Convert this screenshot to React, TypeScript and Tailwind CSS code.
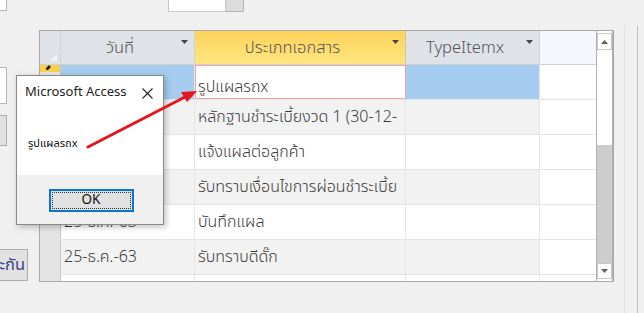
import { ReactNode } from "react";

const rows = [
  { date: "", type: "รูปแผลรถx", current: true },
  { date: "", type: "หลักฐานชำระเบี้ยงวด 1 (30-12-" },
  { date: "", type: "แจ้งแผลต่อลูกค้า" },
  { date: "", type: "รับทราบเงื่อนไขการผ่อนชำระเบี้ย" },
  { date: "25-ธ.ค.-63", type: "บันทึกแผล" },
  { date: "25-ธ.ค.-63", type: "รับทราบดีดั๊ก" },
  { date: "", type: "" },
];

function DropArrow() {
  return (
    <svg width="7" height="4" viewBox="0 0 7 4" className="shrink-0">
      <path d="M0 0h7L3.5 4z" fill="#444" />
    </svg>
  );
}

function HeaderCell({ children, yellow }: { children: ReactNode; yellow?: boolean }) {
  return (
    <div
      className={
        yellow
          ? "flex items-start h-full border-r border-[#d6c58a] bg-gradient-to-b from-[#fdd259] to-[#ffe680] pr-[6px]"
          : "flex items-start h-full border-r border-[#cfd3d8] bg-[#dfe2e7] pr-[6px]"
      }
    >
      <span className="flex-1 text-center pr-[2px] pt-[5px] text-[16.5px] font-[350] text-[#555]">{children}</span>
      <span className="pt-[9px]">
        <DropArrow />
      </span>
    </div>
  );
}

function DataRow({ r, i }: { r: (typeof rows)[number]; i: number }) {
  const alt = i % 2 === 1;
  const base = alt ? "bg-[#f2f2f2]" : "bg-white";
  const cell =
    "h-full border-r border-[#e6e6e6] overflow-hidden whitespace-nowrap pl-[3px] flex items-center text-[16px] font-[350] text-[#3a3a3a]";
  return (
    <div className="grid grid-cols-[21px_134px_211px_134px_56px] h-[35px] border-b border-[#e4e4e4]">
      <div className={r.current ? "h-full bg-[#e6e6e6] border-r border-[#c6c6c6]" : "h-full bg-[#e4e4e4] border-r border-[#c6c6c6]"}>
        {r.current && (
          <div className="h-[7px] bg-[#f7cf4b] flex items-start pl-[5px]">
            <svg width="6" height="6" viewBox="0 0 6 6">
              <path d="M1 5L1 3L4 0L6 2L3 5Z" fill="#222" />
            </svg>
          </div>
        )}
      </div>
      <div className={`${cell} ${r.current ? "bg-[#a6cdf0]" : base}`}>{r.date}</div>
      {r.current ? (
        <div className="h-full bg-white border border-[#f0a3a3] pl-[2px] pt-[11px] text-[16px] leading-[20px] font-[350] text-[#3a3a3a] whitespace-nowrap overflow-hidden">
          {r.type}
        </div>
      ) : (
        <div className={`${cell} ${base}`}>
          <span className="-mt-[1px]">{r.type}</span>
        </div>
      )}
      <div className={`${cell} ${r.current ? "bg-[#a6cdf0]" : base}`}></div>
      <div className="h-full bg-white"></div>
    </div>
  );
}

function ScrollBar() {
  return (
    <div className="w-[17px] h-full border-l border-r border-[#b0b0b0] bg-white flex flex-col pt-[2px] pb-[2px]">
      <div className="h-[17px] border border-[#c8c8c8] bg-white flex items-center justify-center">
        <svg width="7" height="4" viewBox="0 0 7 4">
          <path d="M0 4h7L3.5 0z" fill="#606060" />
        </svg>
      </div>
      <div className="h-[95px]"></div>
      <div className="flex-1 bg-[#cdcdcd]"></div>
      <div className="h-[16px] border border-[#c8c8c8] bg-white flex items-center justify-center">
        <svg width="7" height="4" viewBox="0 0 7 4">
          <path d="M0 0h7L3.5 4z" fill="#606060" />
        </svg>
      </div>
    </div>
  );
}

function Datasheet() {
  return (
    <div className="w-[575px] h-[252px] border border-[#a9a9a9] bg-white flex">
      <div className="w-[556px] h-full overflow-hidden">
        <div className="grid grid-cols-[21px_134px_211px_134px_56px] h-[34px] border-b border-[#d0d0d0]">
          <div className="h-full bg-[#dfe2e7] border-r border-[#cfd3d8] flex items-end justify-end pr-[3px] pb-[3px]">
            <svg width="7" height="7" viewBox="0 0 7 7">
              <path d="M7 0V7H0Z" fill="#f2f3f5" />
            </svg>
          </div>
          <HeaderCell>วันที่</HeaderCell>
          <HeaderCell yellow>ประเภทเอกสาร</HeaderCell>
          <HeaderCell>TypeItemx</HeaderCell>
          <div className="h-full bg-[#f4f6fc]"></div>
        </div>
        {rows.map((r, i) => (
          <DataRow key={i} r={r} i={i} />
        ))}
      </div>
      <ScrollBar />
    </div>
  );
}

function MessageBox() {
  return (
    <div className="absolute left-[16px] top-[75px] w-[148px] h-[150px] bg-white border border-[#8a8a8a] shadow-[2px_2px_6px_rgba(0,0,0,0.25)] flex flex-col">
      <div className="flex items-center justify-between pl-[8px] pr-[10px] h-[32px] pt-[2px]">
        <span className="text-[13px] text-[#222]">Microsoft Access</span>
        <svg width="11" height="11" viewBox="0 0 11 11">
          <path d="M0.5 0.5L10.5 10.5M10.5 0.5L0.5 10.5" stroke="#222" strokeWidth="1.1" />
        </svg>
      </div>
      <div className="flex-1 pl-[11px] pt-[28px] text-[11px] text-[#111]">รูปแผลรถx</div>
      <div className="h-[49px] bg-[#f0f0f0] flex items-start justify-center pt-[14px] pl-[2px]">
        <div className="w-[85px] h-[23px] border-2 border-[#0a74d6] bg-[#e1e1e1] p-[1px]">
          <div className="w-full h-full border border-dotted border-[#333] flex items-center justify-center text-[13.5px] text-[#111]">
            OK
          </div>
        </div>
      </div>
    </div>
  );
}

export default function App() {
  return (
    <div
      className="relative w-[644px] h-[313px] bg-[#f0f0f0] overflow-hidden flex"
      style={{ fontFamily: '"Segoe UI", "Noto Sans Thai", "Noto Sans", "Liberation Sans", sans-serif' }}
    >
      <div className="w-[39px] flex flex-col shrink-0">
        <div className="w-[7px] h-[11px] bg-white border-r border-b border-[#b5b5b5]"></div>
        <div className="w-[7px] h-[37px] mt-[56px] bg-white border border-l-0 border-[#b5b5b5]"></div>
        <div className="w-[7px] h-[31px] mt-[11px] bg-[#e1e1e1] border border-l-0 border-[#adadad]"></div>
        <div className="w-[28px] h-[32px] mt-[103px] bg-[#e1e1e1] border border-l-0 border-[#adadad] flex items-center justify-end pr-[2px] text-[16.5px] text-[#3d3f8f] overflow-hidden whitespace-nowrap">
          ะกัน
        </div>
      </div>
      <div className="flex flex-col shrink-0">
        <div className="h-[30px] flex items-start pl-[129px]">
          <div className="w-[58px] h-[12px] bg-white border border-t-0 border-[#c8c8c8]"></div>
          <div className="w-[18px] h-[12px] bg-[#dcdcdc] border border-t-0 border-l-0 border-[#b5b5b5]"></div>
        </div>
        <Datasheet />
      </div>
      <div className="flex-1 flex pt-[26px]">
        <div className="w-[10px]"></div>
        <div className="w-[1px] h-full bg-[#e2e2e2]"></div>
        <div className="w-[12px]"></div>
        <div className="w-[1px] h-full bg-[#bdbdbd]"></div>
      </div>
      <MessageBox />
      <svg className="absolute left-0 top-0 pointer-events-none" width="644" height="313">
        <line x1="88" y1="147" x2="185" y2="97" stroke="#e8141b" strokeWidth="3" strokeLinecap="round" />
        <path d="M197 91L181 92L187 102Z" fill="#e8141b" />
      </svg>
    </div>
  );
}
